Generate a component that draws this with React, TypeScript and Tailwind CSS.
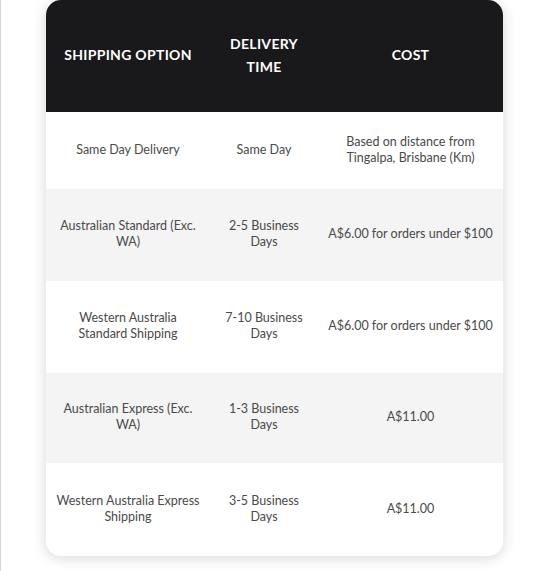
import React from "react";

const rows = [
  { o: "Same Day Delivery", t: "Same Day", c: "Based on distance from Tingalpa, Brisbane (Km)", h: "h-[77px]", bg: "bg-white" },
  { o: "Australian Standard (Exc. WA)", t: "2-5 Business Days", c: "A$6.00 for orders under $100", h: "h-[92px]", bg: "bg-[#f4f4f4]" },
  { o: "Western Australia Standard Shipping", t: "7-10 Business Days", c: "A$6.00 for orders under $100", h: "h-[92px]", bg: "bg-white" },
  { o: "Australian Express (Exc. WA)", t: "1-3 Business Days", c: "A$11.00", h: "h-[90px]", bg: "bg-[#f4f4f4]" },
  { o: "Western Australia Express Shipping", t: "3-5 Business Days", c: "A$11.00", h: "h-[93px]", bg: "bg-white" },
];

export default function App() {
  return (
    <div className="min-h-[571px] w-[551px] bg-white border-l border-[#d6d6d6] font-['Lato',sans-serif]">
      <div className="ml-[45px] w-[457px] rounded-[15px] overflow-hidden bg-white shadow-[0_2px_14px_rgba(0,0,0,0.16)]">
        <table className="w-full border-collapse table-fixed">
          <colgroup>
            <col className="w-[164px]" />
            <col className="w-[108px]" />
            <col className="w-[185px]" />
          </colgroup>
          <thead>
            <tr className="h-[112px] bg-[#19191b] text-white text-[14px] tracking-[0.3px] font-bold leading-[23px] uppercase">
              <th className="px-[8px] pb-[3px] text-center font-bold">Shipping Option</th>
              <th className="px-[8px] pb-[2px] text-center font-bold">Delivery Time</th>
              <th className="px-[8px] pb-[3px] text-center font-bold">Cost</th>
            </tr>
          </thead>
          <tbody>
            {rows.map((r, i) => (
              <tr key={i} className={`${r.h} ${r.bg} text-[12.5px] leading-[16px] text-[#4a4a4a]`}>
                <td className="px-[10px] pb-[2px] text-center align-middle">{r.o}</td>
                <td className="px-[10px] pb-[2px] text-center align-middle">{r.t}</td>
                <td className="px-[8px] pb-[2px] text-center align-middle">{r.c}</td>
              </tr>
            ))}
          </tbody>
        </table>
      </div>
    </div>
  );
}
